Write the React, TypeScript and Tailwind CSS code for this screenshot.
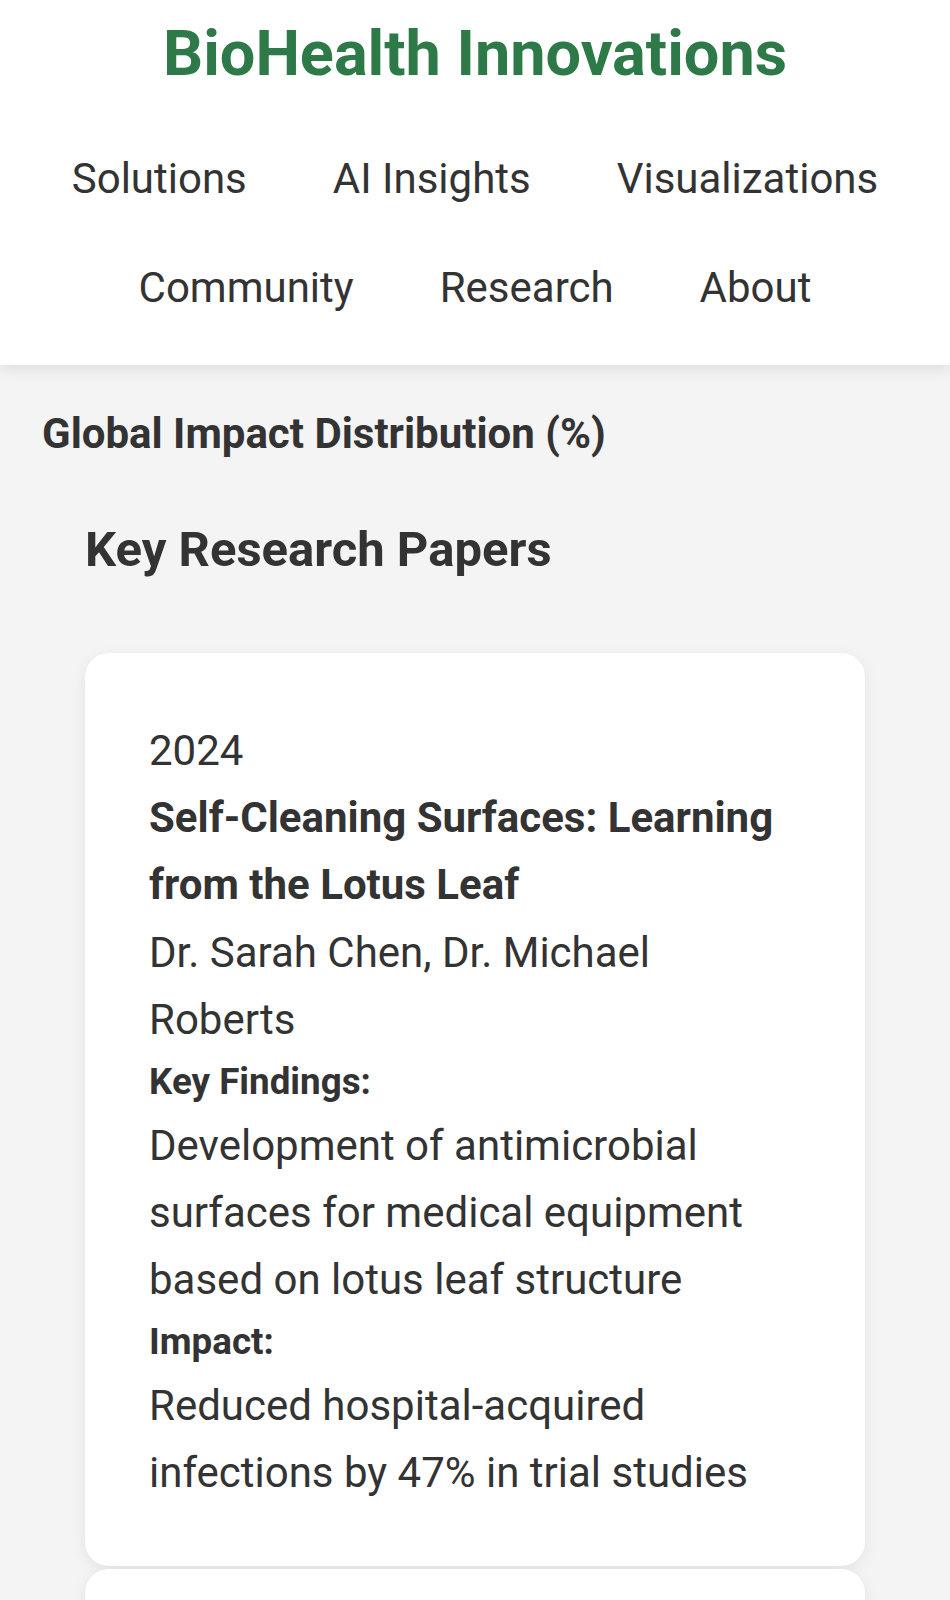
import React from "react";

interface Paper {
    year: number;
    title: string;
    authors: string;
    findings: string;
    impact: string;
}

const navLinks = ["Solutions", "AI Insights", "Visualizations", "Community", "Research", "About"];

const papers: Paper[] = [
    {
        year: 2024,
        title: "Self-Cleaning Surfaces: Learning from the Lotus Leaf",
        authors: "Dr. Sarah Chen, Dr. Michael Roberts",
        findings: "Development of antimicrobial surfaces for medical equipment based on lotus leaf structure",
        impact: "Reduced hospital-acquired infections by 47% in trial studies",
    },
    {
        year: 2023,
        title: "Gecko-Inspired Adhesives for Wound Closure",
        authors: "Dr. Elena Park, Dr. James Wilson",
        findings: "Reusable dry adhesive patches modeled on gecko foot setae",
        impact: "Faster healing times in clinical observations",
    },
];

const PaperCard: React.FC<{ paper: Paper }> = ({ paper }) => (
    <div className="bg-white rounded-[24px] shadow-[0_4px_16px_rgba(0,0,0,0.07)] px-[64px] pt-[64px] pb-[60px]">
        <div>{paper.year}</div>
        <div className="font-bold">{paper.title}</div>
        <div>{paper.authors}</div>
        <div className="text-[36.75px] font-bold">Key Findings:</div>
        <p>{paper.findings}</p>
        <div className="text-[36.75px] font-bold">Impact:</div>
        <p>{paper.impact}</p>
    </div>
);

export default function App() {
    return (
        <div className="min-h-screen bg-[#f4f4f4] text-[#333] text-[42px] leading-[1.6] font-['Roboto',sans-serif]">
            <header className="bg-white pt-[16px] pb-[23px] shadow-[0_5px_14px_rgba(0,0,0,0.09)] relative">
                <h1 className="text-center text-[63px] font-bold leading-[75px] text-[#2d7a48]">
                    BioHealth Innovations
                </h1>
                <nav className="mt-[33px] flex flex-wrap justify-center gap-x-[86px]">
                    {navLinks.map((link) => (
                        <a key={link} href="#" className="py-[21px] text-[#333]">
                            {link}
                        </a>
                    ))}
                </nav>
            </header>

            <main className="px-[42px] pt-[35px]">
                <h3 className="font-bold">Global Impact Distribution (%)</h3>

                <section className="px-[43px] pt-[43px]">
                    <h2 className="text-[49px] font-bold">Key Research Papers</h2>
                    <div className="mt-[64px] flex flex-col gap-[3px]">
                        {papers.map((p) => (
                            <PaperCard key={p.title} paper={p} />
                        ))}
                    </div>
                </section>
            </main>
        </div>
    );
}
